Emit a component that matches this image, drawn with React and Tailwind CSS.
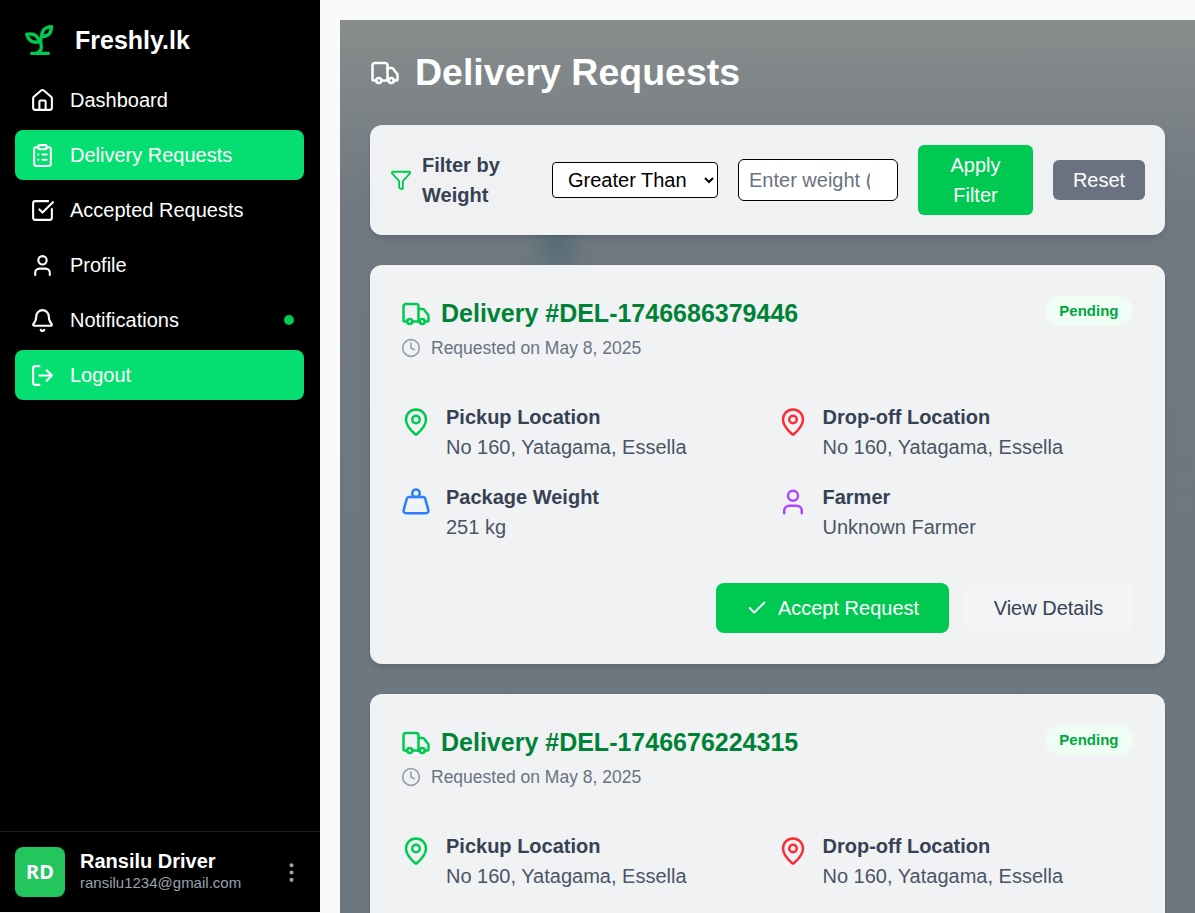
import { House, ClipboardList, SquareCheckBig, User, Bell, LogOut, Truck, Funnel, Clock, MapPin, Weight, Check, EllipsisVertical } from 'lucide-react'

const NAV = [
  { label: 'Dashboard', icon: House },
  { label: 'Delivery Requests', icon: ClipboardList, active: true },
  { label: 'Accepted Requests', icon: SquareCheckBig },
  { label: 'Profile', icon: User },
  { label: 'Notifications', icon: Bell, dot: true },
  { label: 'Logout', icon: LogOut, active: true },
]

const REQUESTS = [
  { id: 'DEL-1746686379446', weight: '251 kg', farmer: 'Unknown Farmer' },
  { id: 'DEL-1746676224315', weight: '251 kg', farmer: 'Unknown Farmer' },
]

// the leafier sprout from older lucide versions, the current one differs
function SproutLogo() {
  return (
    <svg width="40" height="40" viewBox="0 0 24 24" fill="none" stroke="currentColor" strokeWidth="2" strokeLinecap="round" strokeLinejoin="round" className="text-green-500 shrink-0">
      <path d="M7 20h10" />
      <path d="M10 20c5.5-2.5.8-6.4 3-10" />
      <path d="M9.5 9.4c1.1.8 1.8 2.2 2.3 3.7-2 .4-3.5.4-4.8-.3-1.2-.6-2.3-1.9-3-4.2 2.8-.5 4.4 0 5.5.8z" />
      <path d="M14.1 6a7 7 0 0 0-1.1 4c1.9-.1 3.3-.6 4.3-1.4 1-1 1.6-2.3 1.7-4.6-2.7.1-4 1-4.9 2z" />
    </svg>
  )
}

function Sidebar() {
  return (
    <aside className="w-[320px] h-[912px] shrink-0 bg-black text-white flex flex-col">
      <div className="h-[75px] pl-[20px] pt-[20px] pb-[15px] flex items-center">
        <SproutLogo />
        <span className="ml-[15px] text-[25px] leading-[30px] font-bold">Freshly.lk</span>
      </div>
      <nav className="flex flex-col gap-[5px] pl-[15px] pr-[16px]">
        {NAV.map(item => (
          <div
            key={item.label}
            className={`h-[50px] pl-[15px] pr-[10px] rounded-lg flex items-center gap-[15px] text-[20px] ${item.active ? 'bg-green-400' : ''}`}
          >
            <item.icon size={25} strokeWidth={2} />
            <span className="flex-1">{item.label}</span>
            {item.dot && <span className="w-2.5 h-2.5 rounded-full bg-green-500" />}
          </div>
        ))}
      </nav>
      <div className="mt-auto h-[81px] border-t border-[#1f1f1f] pl-[15px] pr-[16px] pt-[15px] flex items-start">
        <div className="w-[50px] h-[50px] rounded-lg bg-[#22c55e] flex items-center justify-center text-[20px] font-bold font-['Noto_Sans',sans-serif]">
          RD
        </div>
        <div className="ml-[15px] flex-1">
          <div className="text-[20px] leading-[28px] font-bold">Ransilu Driver</div>
          <div className="text-[15px] leading-[20px] text-gray-400 -mt-[2px]">ransilu1234@gmail.com</div>
        </div>
        <EllipsisVertical size={25} className="text-gray-400 mt-[13px]" />
      </div>
    </aside>
  )
}

function FilterBar() {
  return (
    <div className="relative h-[110px] bg-[#f0f1f2] rounded-xl shadow-md pl-[20px] pr-[20px] flex items-center gap-[20px] text-[20px]">
      <div className="w-[142px] flex items-center gap-[10px] shrink-0">
        <Funnel size={22} className="text-green-500 shrink-0" />
        <span className="font-bold text-gray-700 leading-[30px]">Filter by Weight</span>
      </div>
      <select className="w-[166px] h-[36px] bg-white text-black border border-black rounded pl-[11px]" defaultValue="gt">
        <option value="gt">Greater Than</option>
      </select>
      <input
        className="w-[160px] h-[42px] bg-white border border-black rounded-md pl-[10px] pr-[27px] placeholder:text-gray-500"
        placeholder="Enter weight (kg)"
      />
      <button className="w-[115px] h-[70px] px-[20px] bg-green-500 text-white rounded-md leading-[30px]">Apply Filter</button>
      <button className="w-[92px] h-[40px] bg-gray-500 text-white rounded-md">Reset</button>
    </div>
  )
}

function Info({ icon: Icon, color, label, value }) {
  return (
    <div className="flex items-start gap-[15px] h-[60px]">
      <Icon size={30} className={`${color} shrink-0 mt-[5px]`} />
      <div className="text-[20px] leading-[30px]">
        <div className="font-bold text-gray-700">{label}</div>
        <div className="text-gray-600">{value}</div>
      </div>
    </div>
  )
}

function RequestCard({ request }) {
  return (
    <div className="relative bg-[#f1f2f4] rounded-xl shadow-md pl-[31px] pr-[32px] pt-[31px] h-[399px] shrink-0">
      <div className="flex items-start justify-between h-[85px] border-b border-[#f3f4f6]">
        <div>
          <div className="flex items-center gap-[10px] h-[34px] mt-[1px]">
            <Truck size={30} className="text-green-500" />
            <span className="text-[25px] font-bold text-green-700">Delivery #{request.id}</span>
          </div>
          <div className="flex items-center gap-[10px] mt-[5px] text-[17.5px] leading-[24px] text-gray-500">
            <Clock size={20} className="text-gray-400" />
            Requested on May 8, 2025
          </div>
        </div>
        <span className="h-[30px] px-[14.5px] rounded-full bg-green-50 text-green-600 text-[15px] leading-[30px] font-bold">
          Pending
        </span>
      </div>
      <div className="grid grid-cols-2 gap-x-[21px] gap-y-[20px] pt-[21px] pb-[20px] border-b border-[#f3f4f6]">
        <Info icon={MapPin} color="text-green-500" label="Pickup Location" value="No 160, Yatagama, Essella" />
        <Info icon={MapPin} color="text-red-500" label="Drop-off Location" value="No 160, Yatagama, Essella" />
        <Info icon={Weight} color="text-blue-500" label="Package Weight" value={request.weight} />
        <Info icon={User} color="text-purple-500" label="Farmer" value={request.farmer} />
      </div>
      <div className="flex justify-end gap-[15px] pt-[20px] text-[20px]">
        <button className="w-[233px] h-[50px] bg-green-500 text-white rounded-lg flex items-center justify-center gap-[10px]">
          <Check size={22} />
          Accept Request
        </button>
        <button className="w-[169px] h-[50px] bg-[#f3f4f6] text-gray-700 rounded-lg">View Details</button>
      </div>
    </div>
  )
}

export default function App() {
  return (
    <div className="h-[913px] overflow-hidden flex bg-[#f9fafb] font-['Liberation_Sans',Arial,sans-serif]">
      <Sidebar />
      <main className="flex-1 min-w-0 pl-[20px] pt-[20px]">
        <div className="relative min-h-[893px] overflow-hidden bg-linear-to-b from-[#888c8c] via-[#6f7880] via-[18%] to-[#6b767e] px-[30px] pt-[30px]">
          {/* dark smudge of the blurred photo, shows between filter bar and first card */}
          <div className="absolute left-[205px] top-[200px] w-[24px] h-[50px] rounded-full bg-[#3f6670] opacity-70 blur-md" />
          <div className="relative flex items-center gap-[15px] h-[45px] mb-[30px] text-white">
            <Truck size={30} />
            <h1 className="text-[37.5px] font-bold">Delivery Requests</h1>
          </div>
          <div className="flex flex-col gap-[30px]">
            <FilterBar />
            {REQUESTS.map(r => <RequestCard key={r.id} request={r} />)}
          </div>
        </div>
      </main>
    </div>
  )
}
